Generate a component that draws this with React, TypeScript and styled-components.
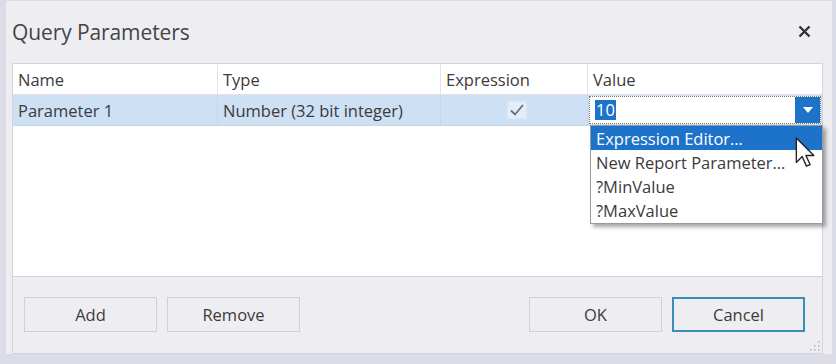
import React from "react";
import styled, { createGlobalStyle } from "styled-components";

const Global = createGlobalStyle`
  html, body { margin: 0; padding: 0; background: #eeeef2; }
  body { font-family: "Open Sans", "Noto Sans", sans-serif; }
  * { box-sizing: border-box; }
`;

const Dialog = styled.div`
  width: 836px;
  height: 364px;
  background: #eeeef2;
  border-left: 6px solid #dcdce6;
  border-right: 4px solid #dcdce6;
  border-bottom: 10px solid #dcdce6;
  border-top: 1px solid #dcdce6;
  display: flex;
  flex-direction: column;
  padding: 0 9px 0 6px;
  color: #3b3b3b;
  position: relative;
`;

const TitleBar = styled.div`
  height: 62px;
  display: flex;
  align-items: center;
  justify-content: space-between;
  padding-bottom: 1px;
`;

const Title = styled.div`
  font-size: 21px;
  color: #444;
  letter-spacing: -0.1px;
`;

const Close = styled.div`
  width: 30px;
  display: flex;
  justify-content: center;
  margin-right: 4px;
`;

const GridBox = styled.div`
  height: 213px;
  background: #fff;
  border: 1px solid #d3d3da;
  border-bottom: none;
  position: relative;
`;

const Row = styled.div<{ $selected?: boolean }>`
  display: grid;
  grid-template-columns: 205px 223px 147px 1fr;
  height: 31px;
  background: ${(p) => (p.$selected ? "#cde0f4" : "#fff")};
  border-bottom: 1px solid ${(p) => (p.$selected ? "#c6d6e8" : "#e2e2e6")};
`;

const Cell = styled.div<{ $center?: boolean; $selected?: boolean }>`
  font-size: 16.5px;
  display: flex;
  align-items: center;
  justify-content: ${(p) => (p.$center ? "center" : "flex-start")};
  padding-left: 5px;
  border-right: 1px solid ${(p) => (p.$selected ? "#c6d6e8" : "#e2e2e6")};
  color: #3b3b3b;
  white-space: nowrap;
  letter-spacing: 0;
  &:last-child { border-right: none; }
`;

const CheckBox = styled.div`
  width: 20px;
  height: 18px;
  display: flex;
  align-items: center;
  justify-content: center;
  border: 1px solid #dde6ef;
  background: #e4edf7;
`;

const Editor = styled.div`
  margin: 1px;
  flex: 1;
  height: 28px;
  background: #fff;
  border: 1px dotted #777;
  display: flex;
  align-items: center;
  padding-left: 5px;
  position: relative;
`;

const SelText = styled.span`
  background: #1c73c9;
  color: #fff;
  font-size: 16.5px;
  line-height: 20px;
  padding: 0 1px;
`;

const DropButton = styled.div`
  position: absolute;
  right: 0;
  top: 0;
  bottom: 0;
  width: 25px;
  background: #1c73c9;
  display: flex;
  align-items: center;
  justify-content: center;
`;

const Popup = styled.div`
  position: absolute;
  left: 577px;
  top: 61px;
  width: 233px;
  background: #fff;
  border: 1px solid #9a9a9a;
  box-shadow: 3px 3px 4px rgba(0, 0, 0, 0.35);
  padding: 0 0 1px;
  z-index: 2;
`;

const Item = styled.div<{ $active?: boolean }>`
  height: 24px;
  display: flex;
  align-items: center;
  padding-left: 5px;
  font-size: 16.5px;
  background: ${(p) => (p.$active ? "#1c73c9" : "transparent")};
  color: ${(p) => (p.$active ? "#fff" : "#3b3b3b")};
  white-space: nowrap;
`;

const Cursor = styled.svg`
  position: absolute;
  left: 789px;
  top: 136px;
  z-index: 3;
`;

const Footer = styled.div`
  height: 78px;
  border: 1px solid #d3d3da;
  display: flex;
  align-items: center;
  justify-content: space-between;
  padding: 0 17px 2px 11px;
  position: relative;
`;

const Group = styled.div`
  display: flex;
  gap: 10px;
`;

const Button = styled.div<{ $default?: boolean }>`
  width: 133px;
  height: 35px;
  border: ${(p) => (p.$default ? "2px solid #3a8fb7" : "1px solid #d0d0d6")};
  background: #eeeef2;
  display: flex;
  align-items: center;
  justify-content: center;
  font-size: 16.5px;
  color: #3b3b3b;
`;

const Grip = styled.svg`
  position: absolute;
  right: 2px;
  bottom: 2px;
`;

export default function App() {
  return (
    <>
      <Global />
      <Dialog>
        <TitleBar>
          <Title>Query Parameters</Title>
          <Close>
            <svg width="13" height="13" viewBox="0 0 13 13">
              <path d="M1.5 1.5 L11.5 11.5 M11.5 1.5 L1.5 11.5" stroke="#333" strokeWidth="2.4" />
            </svg>
          </Close>
        </TitleBar>
        <GridBox>
          <Row>
            <Cell>Name</Cell>
            <Cell>Type</Cell>
            <Cell>Expression</Cell>
            <Cell>Value</Cell>
          </Row>
          <Row $selected>
            <Cell $selected>Parameter 1</Cell>
            <Cell $selected>Number (32 bit integer)</Cell>
            <Cell $selected $center>
              <CheckBox>
                <svg width="16" height="14" viewBox="0 0 16 14">
                  <path d="M2 7.5 L6 11.5 L14 2" fill="none" stroke="#6d6d6d" strokeWidth="1.8" />
                </svg>
              </CheckBox>
            </Cell>
            <Cell $selected style={{ paddingLeft: 0 }}>
              <Editor>
                <SelText>10</SelText>
                <DropButton>
                  <svg width="10" height="6" viewBox="0 0 10 6">
                    <path d="M0 0 H10 L5 6 Z" fill="#fff" />
                  </svg>
                </DropButton>
              </Editor>
            </Cell>
          </Row>
          <Popup>
            <Item $active>Expression Editor…</Item>
            <Item>New Report Parameter…</Item>
            <Item>?MinValue</Item>
            <Item>?MaxValue</Item>
          </Popup>
        </GridBox>
        <Footer>
          <Group>
            <Button>Add</Button>
            <Button>Remove</Button>
          </Group>
          <Group>
            <Button>OK</Button>
            <Button $default>Cancel</Button>
          </Group>
          <Grip width="12" height="12" viewBox="0 0 12 12">
            {[[10, 2], [10, 6], [6, 6], [10, 10], [6, 10], [2, 10]].map(([x, y], i) => (
              <rect key={i} x={x} y={y} width="1.6" height="1.6" fill="#b5b5bd" />
            ))}
          </Grip>
        </Footer>
        <Cursor width="26" height="36" viewBox="0 0 24 34">
          <path d="M1 1 L1 24 L6.5 18.5 L10.5 27.5 L14 26 L10 17.5 L17.5 17.5 Z" fill="#fff" stroke="#222" strokeWidth="1.3" strokeLinejoin="round" />
        </Cursor>
      </Dialog>
    </>
  );
}
